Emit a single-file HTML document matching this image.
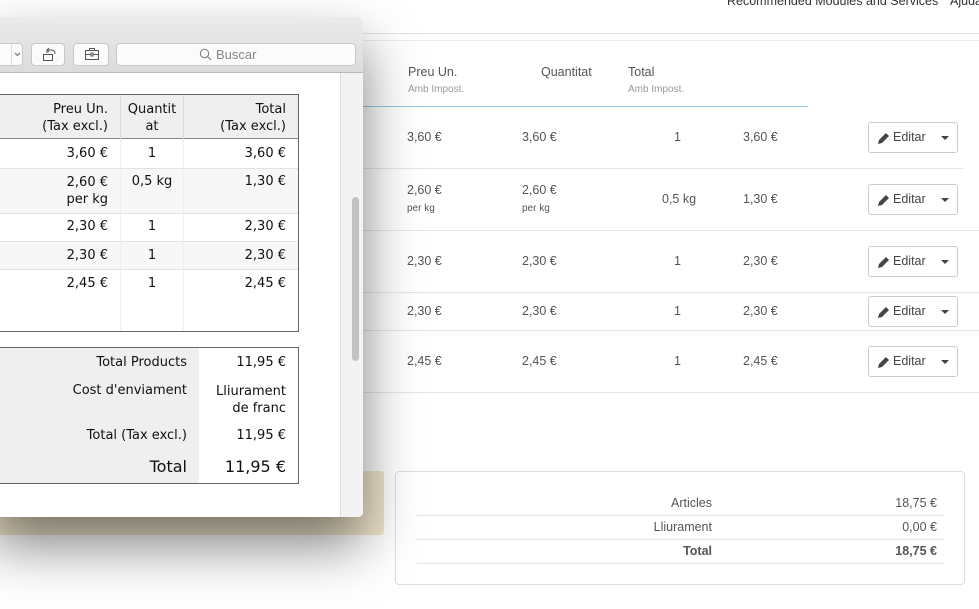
<!DOCTYPE html>
<html><head><meta charset="utf-8"><style>
*{margin:0;padding:0;box-sizing:border-box}
body{width:979px;height:609px;overflow:hidden;background:#fff;position:relative;font-family:"Liberation Sans",sans-serif;color:#555;font-size:12.5px}
.a{position:absolute;white-space:nowrap}
.hl{position:absolute;height:1px;background:#e6e6e6}
.btn{position:absolute;left:868px;width:90px;height:31px;border:1px solid #ccc;border-radius:3px;background:#fff;font-size:12.5px;color:#444}
.btn span{position:absolute;left:24px;top:7px}
.btn svg{position:absolute;left:8px;top:9px}
.btn i{position:absolute;right:8px;top:13px;border-left:4px solid transparent;border-right:4px solid transparent;border-top:4px solid #444}
.win{position:absolute;left:-10px;top:17px;width:373px;height:500px;background:#fff;border-radius:5px;box-shadow:0 28px 55px rgba(0,0,0,.5);overflow:hidden;font-family:"DejaVu Sans",sans-serif;color:#111;font-size:13px}
.tb{position:absolute;left:0;top:0;width:373px;height:56px;background:linear-gradient(#ebebeb,#dcdcdc);border-bottom:1px solid #b9b9b9}
.tbb{position:absolute;top:26px;height:23px;background:#fbfbfb;border:1px solid #c8c8c8;border-radius:4px}
.t{position:absolute;border:1px solid #666}
.c{position:absolute;text-align:right}
</style></head><body>
<div class="a" style="left:727px;top:-6px;font-size:12.5px;color:#333">Recommended Modules and Services</div>
<div class="a" style="left:950px;top:-6px;font-size:12.5px;color:#333">Ajuda</div>
<div class="hl" style="left:363px;width:616px;top:33px;background:#e4e4e4"></div>
<div class="hl" style="left:363px;width:616px;top:40px;background:#ececec"></div>
<div class="a" style="left:408px;top:65px;color:#555">Preu Un.</div>
<div class="a" style="left:408px;top:84px;font-size:10px;color:#999">Amb Impost.</div>
<div class="a" style="left:541px;top:65px;color:#555">Quantitat</div>
<div class="a" style="left:628px;top:65px;color:#555">Total</div>
<div class="a" style="left:628px;top:84px;font-size:10px;color:#999">Amb Impost.</div>
<div class="hl" style="left:363px;width:445px;top:106px;background:#8fcbe3"></div>

<div class="a" style="left:407px;top:130px">3,60 €</div><div class="a" style="left:522px;top:130px">3,60 €</div><div class="a" style="left:674px;top:130px">1</div><div class="a" style="left:743px;top:130px">3,60 €</div>
<div class="hl" style="left:363px;width:600px;top:168px"></div>
<div class="a" style="left:407px;top:183px">2,60 €</div><div class="a" style="left:407px;top:203px;font-size:10px">per kg</div>
<div class="a" style="left:522px;top:183px">2,60 €</div><div class="a" style="left:522px;top:203px;font-size:10px">per kg</div>
<div class="a" style="left:662px;top:192px">0,5 kg</div><div class="a" style="left:743px;top:192px">1,30 €</div>
<div class="hl" style="left:363px;width:616px;top:230px"></div>
<div class="a" style="left:407px;top:254px">2,30 €</div><div class="a" style="left:522px;top:254px">2,30 €</div><div class="a" style="left:674px;top:254px">1</div><div class="a" style="left:743px;top:254px">2,30 €</div>
<div class="hl" style="left:363px;width:616px;top:292px"></div>
<div class="a" style="left:407px;top:304px">2,30 €</div><div class="a" style="left:522px;top:304px">2,30 €</div><div class="a" style="left:674px;top:304px">1</div><div class="a" style="left:743px;top:304px">2,30 €</div>
<div class="hl" style="left:363px;width:616px;top:330px"></div>
<div class="a" style="left:407px;top:354px">2,45 €</div><div class="a" style="left:522px;top:354px">2,45 €</div><div class="a" style="left:674px;top:354px">1</div><div class="a" style="left:743px;top:354px">2,45 €</div>
<div class="hl" style="left:363px;width:616px;top:392px"></div>

<div class="btn" style="top:122px"><svg width="13" height="13" viewBox="0 0 13 13"><path d="M1 12l1-4 7-7 3 3-7 7z" fill="#444"/></svg><span>Editar</span><i></i></div>
<div class="btn" style="top:184px"><svg width="13" height="13" viewBox="0 0 13 13"><path d="M1 12l1-4 7-7 3 3-7 7z" fill="#444"/></svg><span>Editar</span><i></i></div>
<div class="btn" style="top:246px"><svg width="13" height="13" viewBox="0 0 13 13"><path d="M1 12l1-4 7-7 3 3-7 7z" fill="#444"/></svg><span>Editar</span><i></i></div>
<div class="btn" style="top:296px"><svg width="13" height="13" viewBox="0 0 13 13"><path d="M1 12l1-4 7-7 3 3-7 7z" fill="#444"/></svg><span>Editar</span><i></i></div>
<div class="btn" style="top:346px"><svg width="13" height="13" viewBox="0 0 13 13"><path d="M1 12l1-4 7-7 3 3-7 7z" fill="#444"/></svg><span>Editar</span><i></i></div>

<div class="a" style="left:0;top:471px;width:384px;height:64px;background:#f1e6cd;border-radius:0 3px 3px 0"></div>
<div class="a" style="left:395px;top:471px;width:570px;height:114px;border:1px solid #ddd;border-radius:4px"></div>
<div class="a" style="left:600px;top:496px;width:112px;text-align:right">Articles</div><div class="a" style="left:840px;top:496px;width:97px;text-align:right">18,75 €</div>
<div class="hl" style="left:416px;width:528px;top:515px"></div>
<div class="a" style="left:600px;top:520px;width:112px;text-align:right">Lliurament</div><div class="a" style="left:840px;top:520px;width:97px;text-align:right">0,00 €</div>
<div class="hl" style="left:416px;width:528px;top:539px"></div>
<div class="a" style="left:600px;top:544px;width:112px;text-align:right;font-weight:bold">Total</div><div class="a" style="left:840px;top:544px;width:97px;text-align:right;font-weight:bold">18,75 €</div>
<div class="hl" style="left:416px;width:528px;top:563px"></div>

<div class="win">
 <div class="tb">
  <div class="tbb" style="left:0;width:33px"><div style="position:absolute;left:20px;top:0;width:1px;height:21px;background:#ddd"></div><svg style="position:absolute;left:23px;top:8px" width="7" height="5"><path d="M1 1l2.5 2.5L6 1" stroke="#666" fill="none"/></svg></div>
  <div class="tbb" style="left:41px;width:34px"><svg style="position:absolute;left:10px;top:2px" width="15" height="17" viewBox="0 0 15 17"><rect x="1.5" y="8.5" width="9" height="6" fill="none" stroke="#555"/><path d="M5 7V4h5c2 0 3 2 3 4M5 4l2-2M5 4l2 2" fill="none" stroke="#555"/></svg></div>
  <div class="tbb" style="left:83px;width:36px"><svg style="position:absolute;left:10px;top:3px" width="16" height="14" viewBox="0 0 16 14"><rect x="1.5" y="3.5" width="13" height="9" fill="none" stroke="#555"/><path d="M5.5 3.5V1.5h5v2M1.5 7.5h13" fill="none" stroke="#555"/><rect x="7" y="6" width="2" height="3" fill="#fff" stroke="#555"/></svg></div>
  <div class="tbb" style="left:126px;width:240px"><svg style="position:absolute;left:82px;top:4px" width="13" height="13"><circle cx="5.5" cy="5.5" r="4.2" fill="none" stroke="#777"/><path d="M8.5 8.5l3.5 3.5" stroke="#777"/></svg><span style="position:absolute;left:99px;top:3px;font-family:'Liberation Sans',sans-serif;color:#888;font-size:13px">Buscar</span></div>
 </div>
 <div style="position:absolute;left:350px;top:56px;width:1px;height:444px;background:#ddd"></div>
 <div style="position:absolute;left:351px;top:56px;width:22px;height:444px;background:#f3f3f3"></div>
 <div style="position:absolute;left:362px;top:180px;width:7px;height:164px;background:#c2c2c2;border-radius:4px"></div>
 <div class="t" style="left:0;top:77px;width:309px;height:238px;background:#fff"></div>
 <div style="position:absolute;left:1px;top:78px;width:307px;height:44px;background:#efefef;border-bottom:1px solid #888"></div>
 <div style="position:absolute;left:1px;top:151px;width:307px;height:45px;background:#f7f7f7"></div>
 <div style="position:absolute;left:1px;top:224px;width:307px;height:28px;background:#f7f7f7"></div>
 <div class="hl" style="left:1px;width:307px;top:151px;background:#e2e2e2"></div>
 <div class="hl" style="left:1px;width:307px;top:196px;background:#e2e2e2"></div>
 <div class="hl" style="left:1px;width:307px;top:224px;background:#e2e2e2"></div>
 <div class="hl" style="left:1px;width:307px;top:252px;background:#e2e2e2"></div>
 <div style="position:absolute;left:130px;top:78px;width:1px;height:236px;background:#f0f0f0"></div>
 <div style="position:absolute;left:193px;top:78px;width:1px;height:236px;background:#f0f0f0"></div>
 <div style="position:absolute;left:130px;top:78px;width:1px;height:44px;background:#d8d8d8"></div>
 <div style="position:absolute;left:193px;top:78px;width:1px;height:44px;background:#d8d8d8"></div>
 <div class="c" style="left:40px;top:84px;width:78px;line-height:17px">Preu Un.<br>(Tax excl.)</div>
 <div class="a" style="left:133px;top:84px;line-height:17px;text-align:center;width:58px">Quantit<br>at</div>
 <div class="c" style="left:200px;top:84px;width:96px;line-height:17px">Total<br>(Tax excl.)</div>
 <div class="c" style="left:40px;top:129px;width:78px">3,60 €</div><div class="a" style="left:133px;top:129px;width:58px;text-align:center">1</div><div class="c" style="left:200px;top:129px;width:96px">3,60 €</div>
 <div class="c" style="left:40px;top:157px;width:78px;line-height:17px">2,60 €<br>per kg</div><div class="a" style="left:133px;top:157px;width:58px;text-align:center">0,5 kg</div><div class="c" style="left:200px;top:157px;width:96px">1,30 €</div>
 <div class="c" style="left:40px;top:202px;width:78px">2,30 €</div><div class="a" style="left:133px;top:202px;width:58px;text-align:center">1</div><div class="c" style="left:200px;top:202px;width:96px">2,30 €</div>
 <div class="c" style="left:40px;top:231px;width:78px">2,30 €</div><div class="a" style="left:133px;top:231px;width:58px;text-align:center">1</div><div class="c" style="left:200px;top:231px;width:96px">2,30 €</div>
 <div class="c" style="left:40px;top:259px;width:78px">2,45 €</div><div class="a" style="left:133px;top:259px;width:58px;text-align:center">1</div><div class="c" style="left:200px;top:259px;width:96px">2,45 €</div>
 <div class="t" style="left:0;top:330px;width:309px;height:137px;background:#fff"></div>
 <div style="position:absolute;left:1px;top:331px;width:208px;height:135px;background:#efefef"></div>
 <div class="c" style="left:20px;top:338px;width:177px">Total Products</div><div class="c" style="left:210px;top:338px;width:86px">11,95 €</div>
 <div class="c" style="left:20px;top:366px;width:177px">Cost d'enviament</div><div class="c" style="left:210px;top:366px;width:86px;line-height:17px">Lliurament<br>de franc</div>
 <div class="c" style="left:20px;top:411px;width:177px">Total (Tax excl.)</div><div class="c" style="left:210px;top:411px;width:86px">11,95 €</div>
 <div class="c" style="left:20px;top:440px;width:177px;font-size:16px">Total</div><div class="c" style="left:200px;top:440px;width:96px;font-size:16px">11,95 €</div>
</div>
</body></html>
